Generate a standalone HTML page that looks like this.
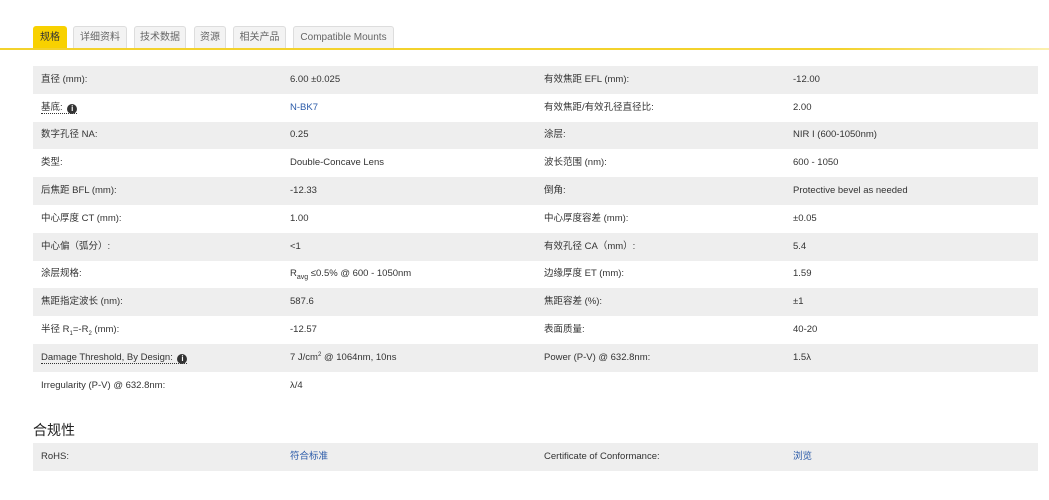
<!DOCTYPE html>
<html><head><meta charset="utf-8"><style>
body{margin:0;background:#fff;font-family:"Liberation Sans","Noto Sans CJK SC",sans-serif;color:#333;width:1049px;height:500px;overflow:hidden;position:relative}
.tab{position:absolute;top:26px;height:22px;box-sizing:border-box;border:1px solid #ddd;border-bottom:none;background:#f3f3f3;color:#666;font-size:10px;line-height:22px;text-align:center;border-radius:3px 3px 0 0;white-space:nowrap}
.tab.a{background:#f8d100;color:#333;border-color:#f8d100}
.line{position:absolute;top:48px;left:0;width:1049px;height:2px;background:linear-gradient(to right,#f3d22c 80%,#fbf0b0)}
table{position:absolute;left:33px;top:66px;width:1005px;border-collapse:collapse;font-size:9.5px;table-layout:fixed}
td{height:27.8px;padding:0 0 0 8px;vertical-align:middle;line-height:14px;white-space:nowrap}
tr:nth-child(odd) td{background:#eeeeee}
.b{color:#2a5aa8}
.c1{width:241px}.c2{width:246px}.c3{width:241px}
.u{border-bottom:1px dotted #333}
.i{display:inline-block;width:10px;height:10px;border-radius:50%;background:#333;color:#fff;font-size:8px;line-height:10px;text-align:center;font-weight:bold;vertical-align:-1px;margin-left:2px}
sub,sup{line-height:0}
h3{position:absolute;left:33px;top:420px;margin:0;font-size:14px;font-weight:normal;color:#222}
table.t2{top:443px}
</style></head><body>
<div class="tab a" style="left:33px;width:34px">规格</div>
<div class="tab" style="left:73px;width:54px">详细资料</div>
<div class="tab" style="left:134px;width:52px">技术数据</div>
<div class="tab" style="left:194px;width:32px">资源</div>
<div class="tab" style="left:233px;width:53px">相关产品</div>
<div class="tab" style="left:293px;width:101px">Compatible Mounts</div>
<div class="line"></div>
<table>
<colgroup><col style="width:249px"><col style="width:254px"><col style="width:249px"><col></colgroup>
<tr><td>直径 (mm):</td><td>6.00 ±0.025</td><td>有效焦距 EFL (mm):</td><td>-12.00</td></tr>
<tr><td><span class="u">基底: <span class="i">i</span></span></td><td class="b">N-BK7</td><td>有效焦距/有效孔径直径比:</td><td>2.00</td></tr>
<tr><td>数字孔径 NA:</td><td>0.25</td><td>涂层:</td><td>NIR I (600-1050nm)</td></tr>
<tr><td>类型:</td><td>Double-Concave Lens</td><td>波长范围 (nm):</td><td>600 - 1050</td></tr>
<tr><td>后焦距 BFL (mm):</td><td>-12.33</td><td>倒角:</td><td>Protective bevel as needed</td></tr>
<tr><td>中心厚度 CT (mm):</td><td>1.00</td><td>中心厚度容差 (mm):</td><td>±0.05</td></tr>
<tr><td>中心偏（弧分）:</td><td>&lt;1</td><td>有效孔径 CA（mm）:</td><td>5.4</td></tr>
<tr><td>涂层规格:</td><td>R<sub style="font-size:7px">avg</sub> ≤0.5% @ 600 - 1050nm</td><td>边缘厚度 ET (mm):</td><td>1.59</td></tr>
<tr><td>焦距指定波长 (nm):</td><td>587.6</td><td>焦距容差 (%):</td><td>±1</td></tr>
<tr><td>半径 R<sub style="font-size:6px">1</sub>=-R<sub style="font-size:6px">2</sub> (mm):</td><td>-12.57</td><td>表面质量:</td><td>40-20</td></tr>
<tr><td><span class="u">Damage Threshold, By Design: <span class="i">i</span></span></td><td>7 J/cm<sup style="font-size:6px">2</sup> @ 1064nm, 10ns</td><td>Power (P-V) @ 632.8nm:</td><td>1.5λ</td></tr>
<tr><td>Irregularity (P-V) @ 632.8nm:</td><td>λ/4</td><td></td><td></td></tr>
</table>
<h3>合规性</h3>
<table class="t2">
<colgroup><col style="width:249px"><col style="width:254px"><col style="width:249px"><col></colgroup>
<tr><td>RoHS:</td><td class="b">符合标准</td><td>Certificate of Conformance:</td><td class="b">浏览</td></tr>
</table>
</body></html>
